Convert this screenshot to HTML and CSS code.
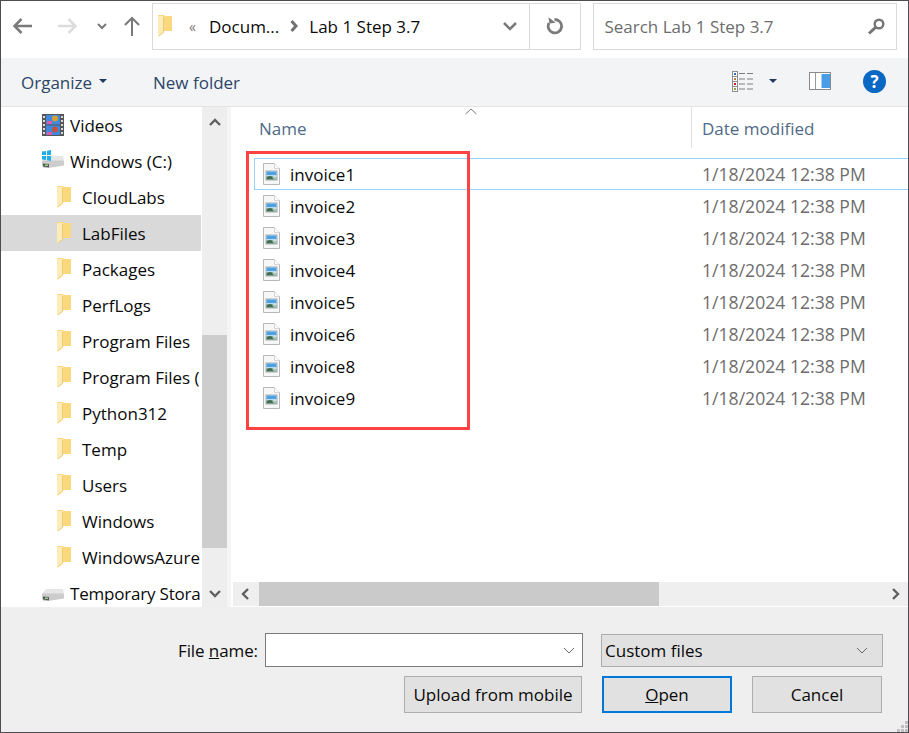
FILE: index.html
```html
<!DOCTYPE html>
<html lang="en">
<head>
<meta charset="utf-8">
<title>Open</title>
<link rel="stylesheet" href="styles.css">
</head>
<body>
<svg class="defs" width="0" height="0" aria-hidden="true">
  <symbol id="folder" viewBox="0 0 15 22">
    <path d="M0 0h6l1 1h7v15H6v1.500L0.500 21.500 0 21z" fill="#fbd97f"/>
    <path d="M6 2h8v14H6z" fill="#fbd77e"/>
    <path d="M0 1h5.500v16.200L1 21H0z" fill="#fdebb8"/>
    <path d="M5.500 2v15.200L1 21" fill="none" stroke="#e8c46c" stroke-width=".8"/>
  </symbol>
  <symbol id="file" viewBox="0 0 17 22">
    <path d="M.5.500h11l5 5v16H.5z" fill="#f7f7f7" stroke="#b8b8b8"/>
    <path d="M11.500.500v5h5" fill="#fff" stroke="#d4d4d4"/>
    <rect x="3" y="8" width="11" height="9" fill="#fff" stroke="#a3abb1" stroke-width="1"/>
    <rect x="3.500" y="8.500" width="10" height="4" fill="#4aa2e4"/>
    <rect x="3.500" y="12.500" width="10" height="1" fill="#d5e8e8"/>
    <path d="M3.500 13.500l4-.500 6 1.500v2h-10z" fill="#3f6b52"/>
    <path d="M9 14l4.500-.500v3H11z" fill="#a9c7b6"/>
  </symbol>
  <symbol id="drive" viewBox="0 0 22 12">
    <path d="M4 0h17l1 5v4H0V5z" fill="#e6e6e6"/>
    <path d="M0 5l1-.500h20L22 5v4.500L6 12H2l-2-2z" fill="#cccccc"/>
    <path d="M1 7.500l6 .500v3.500l-6-1z" fill="#5a5a5a"/>
    <path d="M3 8.500h3v1.500H3z" fill="#8fd88a"/>
  </symbol>
</svg>
<div class="window">
  <header class="nav">
    <svg class="nav-ic" width="20" height="18" viewBox="0 0 20 18"><path d="M20 9H3M9.500 2 2.500 9l7 7" fill="none" stroke="#7a7a7a" stroke-width="2.500"/></svg>
    <svg class="nav-ic fwd" width="20" height="18" viewBox="0 0 20 18"><path d="M0 9h17M10.500 2l7 7-7 7" fill="none" stroke="#dcdcdc" stroke-width="2.500"/></svg>
    <svg class="nav-ic chev" width="10" height="7" viewBox="0 0 10 7"><path d="M1 1l4 4 4-4" fill="none" stroke="#7a7a7a" stroke-width="2"/></svg>
    <svg class="nav-ic up" width="16" height="20" viewBox="0 0 16 20"><path d="M8 20V2M1 9l7-7 7 7" fill="none" stroke="#7a7a7a" stroke-width="2"/></svg>
    <div class="address">
      <svg class="addr-folder" width="15" height="22"><use href="#folder"/></svg>
      <span class="crumb-more">«</span>
      <span class="crumb">Docum...</span>
      <svg class="crumb-sep" width="8" height="12" viewBox="0 0 8 12"><path d="M1.500 1l4.500 5-4.500 5" fill="none" stroke="#707070" stroke-width="3"/></svg>
      <span class="crumb">Lab 1 Step 3.7</span>
      <span class="spacer"></span>
      <svg class="addr-down" width="16" height="10" viewBox="0 0 16 10"><path d="M2 2l6 6 6-6" fill="none" stroke="#7a7a7a" stroke-width="2.500"/></svg>
      <span class="addr-refresh">
        <svg width="18" height="18" viewBox="0 0 18 18"><path d="M8.500 2.500A6.700 6.700 0 1 1 3 6" fill="none" stroke="#7a7a7a" stroke-width="2.800"/><path d="M3 0v6.500h6.500z" fill="#7a7a7a" transform="rotate(-8 4 4)"/></svg>
      </span>
    </div>
    <div class="search">
      <span class="search-text">Search Lab 1 Step 3.7</span>
      <svg width="18" height="17" viewBox="0 0 18 17"><circle cx="12" cy="6" r="4.300" fill="none" stroke="#767676" stroke-width="2.400"/><path d="M8.800 9.200 2 15.500" stroke="#767676" stroke-width="3"/></svg>
    </div>
  </header>

  <div class="toolbar">
    <span class="tool organize">Organize<i class="caret"></i></span>
    <span class="tool">New folder</span>
    <span class="spacer"></span>
    <svg class="views" width="22" height="21" viewBox="0 0 22 21">
      <g fill="#fff" stroke="#8d8d8d"><rect x=".5" y=".5" width="5" height="5"/><rect x=".5" y="5.500" width="5" height="5"/><rect x=".5" y="10.500" width="5" height="5"/><rect x=".5" y="15.500" width="5" height="5"/></g>
      <rect x="2" y="2" width="2" height="2" fill="#2d6fb8"/><rect x="2" y="7" width="2" height="2" fill="#b6803c"/><rect x="2" y="12" width="2" height="2" fill="#cc2020"/><rect x="2" y="17" width="2" height="2" fill="#86a83c"/>
      <path d="M7 2.500h6M15 2.500h6M7 8h6M15 8h6M7 13h6M15 13h6M7 18h6M15 18h6" stroke="#7f7f7f"/>
    </svg>
    <i class="caret views-caret"></i>
    <svg class="pane" width="22" height="18" viewBox="0 0 22 18"><rect x=".5" y=".5" width="21" height="17" fill="#fff" stroke="#8a8a8a"/><rect x="12.500" y="2" width="8.500" height="14" fill="#4a9ee8"/><path d="M6.500 1v16" stroke="#9a9a9a"/></svg>
    <span class="help">?</span>
  </div>

  <main class="main">
    <nav class="side">
      <ul class="tree">
        <li class="node drive-node"><svg width="22" height="22" viewBox="0 0 22 22"><rect width="22" height="22" fill="#555"/><rect x="4" y="1" width="14" height="9.500" fill="#3f8ae0"/><rect x="4" y="11.500" width="14" height="9.500" fill="#3f8ae0"/><circle cx="13" cy="4.500" r="3" fill="#d8a030"/><circle cx="13" cy="15.500" r="3" fill="#c85040"/><path d="M5 7h5v3H5zM5 18h5v3H5z" fill="#e05aa6"/><path d="M1 2h2v2H1zM1 6h2v2H1zM1 10h2v2H1zM1 14h2v2H1zM1 18h2v2H1zM19 2h2v2h-2zM19 6h2v2h-2zM19 10h2v2h-2zM19 14h2v2h-2zM19 18h2v2h-2z" fill="#ddd"/></svg>Videos</li>
        <li class="node drive-node"><span class="drive-ic win"><svg class="winlogo" width="9" height="11" viewBox="0 0 9 11"><path d="M0 1.500 4 1v4H0zM5 .8 9 0v5H5zM0 6h4v4l-4-.500zM5 6h4v5l-4-.800z" fill="#22ade9"/></svg><svg class="hdd" width="22" height="12"><use href="#drive"/></svg></span>Windows (C:)</li>
        <li class="node"><svg width="15" height="22"><use href="#folder"/></svg>CloudLabs</li>
        <li class="node selected"><svg width="15" height="22"><use href="#folder"/></svg>LabFiles</li>
        <li class="node"><svg width="15" height="22"><use href="#folder"/></svg>Packages</li>
        <li class="node"><svg width="15" height="22"><use href="#folder"/></svg>PerfLogs</li>
        <li class="node"><svg width="15" height="22"><use href="#folder"/></svg>Program Files</li>
        <li class="node"><svg width="15" height="22"><use href="#folder"/></svg>Program Files (</li>
        <li class="node"><svg width="15" height="22"><use href="#folder"/></svg>Python312</li>
        <li class="node"><svg width="15" height="22"><use href="#folder"/></svg>Temp</li>
        <li class="node"><svg width="15" height="22"><use href="#folder"/></svg>Users</li>
        <li class="node"><svg width="15" height="22"><use href="#folder"/></svg>Windows</li>
        <li class="node"><svg width="15" height="22"><use href="#folder"/></svg>WindowsAzure</li>
        <li class="node drive-node tight"><span class="drive-ic"><svg class="hdd" width="22" height="12"><use href="#drive"/></svg></span>Temporary Stora</li>
      </ul>
      <div class="vscroll">
        <svg width="12" height="8" viewBox="0 0 12 8"><path d="M1 7l5-5 5 5" fill="none" stroke="#606060" stroke-width="2.400"/></svg>
        <div class="vtrack"><div class="vthumb"></div></div>
        <svg width="12" height="8" viewBox="0 0 12 8"><path d="M1 1l5 5 5-5" fill="none" stroke="#606060" stroke-width="2.400"/></svg>
      </div>
    </nav>
    <section class="content">
      <div class="head">
        <span class="col-name">Name</span>
        <span class="col-date">Date modified</span>
        <svg class="sort" width="12" height="7" viewBox="0 0 12 7"><path d="M.5 6 6 1l5.500 5" fill="none" stroke="#7a7a7a"/></svg>
      </div>
      <ul class="files">
        <li class="file focus"><svg width="17" height="22"><use href="#file"/></svg><span class="fname">invoice1</span><span class="fdate">1/18/2024 12:38 PM</span></li>
        <li class="file"><svg width="17" height="22"><use href="#file"/></svg><span class="fname">invoice2</span><span class="fdate">1/18/2024 12:38 PM</span></li>
        <li class="file"><svg width="17" height="22"><use href="#file"/></svg><span class="fname">invoice3</span><span class="fdate">1/18/2024 12:38 PM</span></li>
        <li class="file"><svg width="17" height="22"><use href="#file"/></svg><span class="fname">invoice4</span><span class="fdate">1/18/2024 12:38 PM</span></li>
        <li class="file"><svg width="17" height="22"><use href="#file"/></svg><span class="fname">invoice5</span><span class="fdate">1/18/2024 12:38 PM</span></li>
        <li class="file"><svg width="17" height="22"><use href="#file"/></svg><span class="fname">invoice6</span><span class="fdate">1/18/2024 12:38 PM</span></li>
        <li class="file"><svg width="17" height="22"><use href="#file"/></svg><span class="fname">invoice8</span><span class="fdate">1/18/2024 12:38 PM</span></li>
        <li class="file"><svg width="17" height="22"><use href="#file"/></svg><span class="fname">invoice9</span><span class="fdate">1/18/2024 12:38 PM</span></li>
      </ul>
      <div class="hscroll">
        <svg width="8" height="12" viewBox="0 0 8 12"><path d="M7 1 2 6l5 5" fill="none" stroke="#606060" stroke-width="2.400"/></svg>
        <div class="htrack"><div class="hthumb"></div></div>
        <svg width="8" height="12" viewBox="0 0 8 12"><path d="M1 1l5 5-5 5" fill="none" stroke="#606060" stroke-width="2.400"/></svg>
      </div>
      <div class="callout"></div>
    </section>
  </main>

  <footer class="foot">
    <div class="foot-row">
      <label class="fn-label">File <u>n</u>ame:</label>
      <div class="fn-input"><svg width="12" height="7" viewBox="0 0 12 7"><path d="M1 1l5 5 5-5" fill="none" stroke="#6a6a6a"/></svg></div>
      <div class="ftype"><span>Custom files</span><svg width="12" height="7" viewBox="0 0 12 7"><path d="M1 1l5 5 5-5" fill="none" stroke="#6a6a6a"/></svg></div>
    </div>
    <div class="foot-row btns">
      <button class="btn upload">Upload from mobile</button>
      <button class="btn open"><u>O</u>pen</button>
      <button class="btn">Cancel</button>
    </div>
    <svg class="grip" width="11" height="11" viewBox="0 0 11 11"><path d="M8 0h3v3H8zM4 4h3v3H4zM8 4h3v3H8zM0 8h3v3H0zM4 8h3v3H4zM8 8h3v3H8z" fill="#c0c0c0"/></svg>
  </footer>
</div>
</body>
</html>
```

FILE: styles.css
```css
* { box-sizing: border-box; }
html, body { margin: 0; padding: 0; }
body { width: 909px; height: 733px; overflow: hidden; font-family: "Open Sans", "Noto Sans", sans-serif; font-size: 17px; color: #0a0a0a; background: #fff; }
.defs { position: absolute; }
ul { list-style: none; margin: 0; padding: 0; }
svg { display: block; flex: none; }
.spacer { flex: 1; }

.window { width: 909px; height: 733px; display: flex; flex-direction: column; border: 1px solid #4e4c4e; position: relative; }

.nav { height: 57px; flex: none; display: flex; align-items: center; background: #fff; padding: 0 11px 7px 0; }
.nav-ic { margin-left: 11px; }
.nav-ic.fwd { margin-left: 26px; }
.nav-ic.chev { margin-left: 19px; }
.nav-ic.up { margin-left: 17px; }
.address { width: 430px; height: 47px; margin-left: 12px; display: flex; align-items: center; border: 1px solid #d9d9d9; }
.addr-folder { margin-left: 5px; }
.crumb-more { margin-left: 16px; width: 20px; color: #777; font-size: 14px; }
.crumb { padding-top: 1px; }
.crumb-sep { margin: 0 11px; }
.addr-down { margin-right: 11px; }
.addr-refresh { width: 51px; height: 45px; border-left: 1px solid #d9d9d9; display: flex; align-items: center; justify-content: center; }
.search { width: 304px; height: 47px; margin-left: 12px; display: flex; align-items: center; justify-content: space-between; border: 1px solid #d9d9d9; padding: 0 11px 0 10px; color: #6d6d6d; }
.search-text { padding-top: 1px; }

.toolbar { height: 49px; flex: none; display: flex; align-items: center; background: #f3f4f6; border-bottom: 1px solid #e4e4e4; padding: 0 22px 2px 20px; color: #2c4668; }
.tool { white-space: nowrap; padding-top: 3px; }
.organize { display: flex; align-items: center; width: 132px; }
.caret { display: block; width: 0; height: 0; border: 4px solid transparent; border-top: 4px solid #1f3a5c; border-bottom: 0; margin-left: 7px; }
.organize .caret { margin-top: -3px; }
.views { margin-right: 15px; }
.views-caret { margin: 0 32px 0 0; }
.pane { margin-right: 32px; }
.help { width: 23px; height: 23px; border-radius: 50%; background: #0868c4; color: #fff; font-weight: 700; font-size: 17px; line-height: 23px; text-align: center; }

.main { flex: 1; min-height: 0; display: flex; background: #fff; }
.side { width: 226px; flex: none; display: flex; height: 500px; }
.tree { width: 200px; overflow: hidden; flex: none; margin-right: 1px; }
.node { height: 36px; display: flex; align-items: center; gap: 10px; padding-left: 56px; white-space: nowrap; overflow: hidden; }
.node.selected { background: #d9d9d9; }
.node.drive-node { padding-left: 41px; gap: 6px; }
.node.tight { letter-spacing: -0.2px; }
.drive-ic { display: block; flex: none; width: 22px; height: 22px; position: relative; }
.drive-ic .hdd { position: absolute; left: 0; top: 7px; }
.drive-ic.win .hdd { top: 6px; }
.drive-ic .winlogo { position: absolute; left: 0; top: 0; z-index: 1; }
.vscroll { width: 25px; flex: none; background: #eeeeee; display: flex; flex-direction: column; align-items: center; padding: 11px 0 9px; }
.vtrack { flex: 1; width: 100%; padding-top: 209px; }
.vthumb { height: 213px; background: #cdcdcd; }

.content { flex: 1; min-width: 0; margin-left: 4px; position: relative; display: flex; flex-direction: column; box-shadow: -4px 0 0 #f5f5f5; }
.head { height: 41px; flex: none; display: flex; position: relative; color: #4f6a88; }
.col-name { width: 460px; padding: 10px 0 0 28px; }
.col-date { flex: 1; border-left: 1px solid #dfe3e8; padding: 10px 0 0 10px; white-space: nowrap; overflow: hidden; }
.sort { position: absolute; left: 234px; top: 1px; }
.files { flex: 1; padding: 10px 0 0 23px; }
.file { height: 32px; display: flex; align-items: center; padding-left: 8px; border: 1px solid transparent; border-right: 0; white-space: nowrap; }
.file.focus { border-color: #99d1ff; }
.fname { width: 412px; margin-left: 10px; }
.fdate { color: #6d6d6d; flex: none; font-size: 17.6px; }
.hscroll { height: 24px; flex: none; margin: 0 0 1px 2px; background: #efefef; display: flex; align-items: center; padding: 0 8px; }
.htrack { flex: 1; margin: 0 0 0 4px; height: 100%; }
.hthumb { width: 400px; height: 100%; margin-left: 6px; background: #cacaca; }
.callout { position: absolute; left: 15px; top: 44px; width: 224px; height: 279px; border: 3px solid #ff4343; }

.foot { height: 125px; flex: none; background: #efefef; position: relative; padding: 26px 26px 0 177px; }
.foot-row { display: flex; align-items: center; }
.fn-label { width: 87px; flex: none; white-space: nowrap; letter-spacing: -0.1px; }
.fn-input { width: 318px; height: 34px; flex: none; background: #fff; border: 1px solid #7a7a7a; display: flex; align-items: center; justify-content: flex-end; padding-right: 7px; }
.ftype { width: 282px; height: 33px; margin-left: 18px; background: #e1e1e1; border: 1px solid #adadad; display: flex; align-items: center; justify-content: space-between; padding: 0 14px 0 3px; flex: none; }
.btns { margin-top: 9px; justify-content: flex-end; gap: 20px; }
.btn { width: 130px; height: 37px; background: #e1e1e1; border: 1px solid #adadad; font: inherit; color: inherit; padding: 0; }
.btn.upload { width: 178px; }
.btn.open { border: 2px solid #0078d7; }
.grip { position: absolute; right: 0; bottom: 0; }
```
